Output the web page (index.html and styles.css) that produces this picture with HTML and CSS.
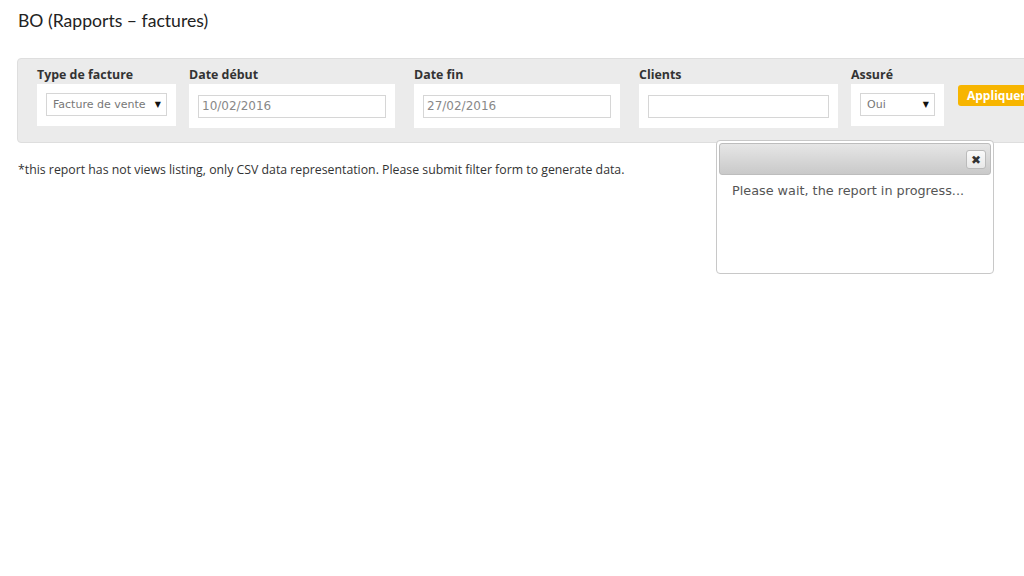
FILE: index.html
```html
<!DOCTYPE html>
<html lang="fr">
<head>
    <meta charset="UTF-8">
    <title>BO (Rapports – factures)</title>
    <link rel="stylesheet" href="styles.css">
</head>
<body>

<h1 class="page-title">BO (Rapports – factures)</h1>

<form class="filter" id="report_filter">
    <div class="field">
        <label>Type de facture</label>
        <div class="field-box">
            <div class="fake-select sel-type">Facture de vente <span class="caret">▼</span></div>
        </div>
    </div>
    <div class="field">
        <label>Date début</label>
        <div class="field-box">
            <input type="text" class="date-input" value="10/02/2016">
        </div>
    </div>
    <div class="field">
        <label>Date fin</label>
        <div class="field-box">
            <input type="text" class="date-input" value="27/02/2016">
        </div>
    </div>
    <div class="field">
        <label>Clients</label>
        <div class="field-box">
            <input type="text" class="clients-input" value="">
        </div>
    </div>
    <div class="field">
        <label>Assuré</label>
        <div class="field-box">
            <div class="fake-select sel-assure">Oui <span class="caret">▼</span></div>
        </div>
    </div>
    <button type="submit" class="btn-apply">Appliquer</button>
</form>

<p class="note">*this report has not views listing, only CSV data representation. Please submit filter form to generate data.</p>

<div class="dialog">
    <div class="dialog-head">
        <span class="dialog-close">✖</span>
    </div>
    <div class="dialog-body">Please wait, the report in progress...</div>
</div>

</body>
</html>
```

FILE: styles.css
```css
html, body {
    overflow: hidden;
}
body {
    margin: 0;
    width: 1024px;
    height: 576px;
    background: #fff;
    color: #333;
    font-family: 'Open Sans', 'Liberation Sans', sans-serif;
    position: relative;
}
.page-title {
    font-family: 'Lato', sans-serif;
    font-weight: normal;
    font-size: 17.6px;
    line-height: 20px;
    color: #222;
    margin: 0;
    padding: 11px 0 0 18px;
}
.filter {
    display: flex;
    align-items: flex-start;
    width: 1040px;
    box-sizing: border-box;
    margin: 27px 0 0 17px;
    padding: 7px 19px 14px 19px;
    background: #ebebeb;
    border: 1px solid #dedede;
    border-radius: 4px;
}
.field {
    display: flex;
    flex-direction: column;
    margin-right: 13px;
}
.field label {
    font-size: 12.4px;
    font-weight: bold;
    line-height: 18px;
    color: #333;
    height: 18px;
}
.field-box {
    background: #fff;
    padding: 9px 9px 10px 9px;
}
.fake-select, .date-input, .clients-input {
    box-sizing: border-box;
    height: 23px;
    border: 1px solid #d6d6d6;
    background: #fff;
    font-family: 'DejaVu Sans', sans-serif;
    font-size: 11px;
    color: #777;
}
.fake-select {
    display: flex;
    align-items: center;
    justify-content: space-between;
    padding: 0 5px 0 6px;
}
.caret {
    font-size: 8px;
    color: #111;
}
.sel-type { width: 121px; }
.sel-assure { width: 75px; }
.date-input {
    width: 188px;
    padding: 0 3px;
    font-size: 12px;
    color: #888;
    outline: none;
}
.clients-input {
    width: 181px;
    outline: none;
}
.field:nth-child(2), .field:nth-child(3) {
    margin-right: 19px;
}
.field:nth-child(5) {
    margin-right: 14px;
}
.btn-apply {
    margin-top: 19px;
    height: 21px;
    padding: 0 9px;
    border: none;
    border-radius: 3px;
    background: #f7b500;
    color: #fff;
    font-family: 'Open Sans', sans-serif;
    font-weight: bold;
    font-size: 12px;
    cursor: pointer;
}
.note {
    font-size: 12.3px;
    margin: 18px 0 0 18px;
    color: #333;
}
.dialog {
    position: absolute;
    left: 716px;
    top: 140px;
    width: 278px;
    height: 134px;
    box-sizing: border-box;
    padding: 2px;
    background: #fff;
    border: 1px solid #c8c8c8;
    border-radius: 4px;
}
.dialog-head {
    height: 32px;
    box-sizing: border-box;
    border: 1px solid #bdbdbd;
    border-radius: 3px;
    background: linear-gradient(#e6e6e6, #c9c9c9);
    display: flex;
    justify-content: flex-end;
    align-items: center;
    padding-right: 4px;
}
.dialog-close {
    width: 18px;
    height: 17px;
    border: 1px solid #bbb;
    border-radius: 3px;
    background: linear-gradient(#fafafa, #e8e8e8);
    display: flex;
    align-items: center;
    justify-content: center;
    font-size: 12px;
    color: #333;
}
.dialog-body {
    padding: 8px 13px;
    font-family: 'DejaVu Sans', sans-serif;
    font-size: 12.8px;
    color: #555;
}
```
